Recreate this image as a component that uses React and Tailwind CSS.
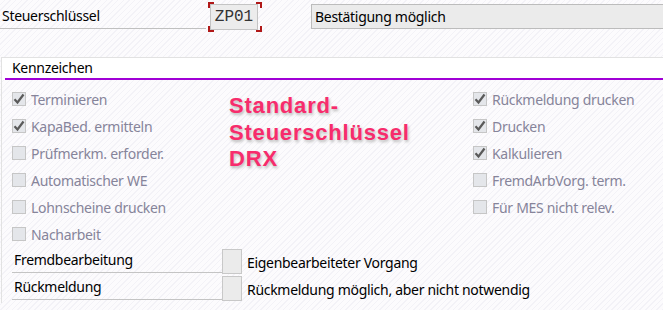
import React from 'react';

const Check = ({ checked }) => (
  <span className="flex h-[14px] w-[14px] shrink-0 items-center justify-center border border-[#c6c6c6] bg-[#e4e6ea]">
    {checked && (
      <svg width="12" height="12" viewBox="0 0 12 12">
        <path d="M1.5 6.2 L4.5 9.5 L10.5 1.5" fill="none" stroke="#5a5a5a" strokeWidth="2.2" strokeLinejoin="miter" />
      </svg>
    )}
  </span>
);

const Flag = ({ label, checked }) => (
  <div className="flex h-[27px] items-start gap-[5px]">
    <Check checked={checked} />
    <span className="-mt-[3px] whitespace-nowrap text-[14px] text-[#86849a]">{label}</span>
  </div>
);

const FieldRow = ({ label, text }) => (
  <div className="flex h-[27px] items-start">
    <div className="flex h-[24px] w-[210px] items-end border-b border-[#c4c4c4] pb-[2px] pl-[2px]">{label}</div>
    <div className="h-[25px] w-[20px] border border-[#c8c8c8] bg-[#ebebeb]" />
    <div className="pl-[5px] pt-[3px] whitespace-nowrap">{text}</div>
  </div>
);

export default function App() {
  const left = [
    ['Terminieren', true],
    ['KapaBed. ermitteln', true],
    ['Prüfmerkm. erforder.', false],
    ['Automatischer WE', false],
    ['Lohnscheine drucken', false],
    ['Nacharbeit', false],
  ];
  const right = [
    ['Rückmeldung drucken', true],
    ['Drucken', true],
    ['Kalkulieren', true],
    ['FremdArbVorg. term.', false],
    ['Für MES nicht relev.', false],
  ];

  return (
    <div className="h-[310px] w-[663px] overflow-hidden bg-[repeating-linear-gradient(135deg,#fcfbfd_0px,#fcfbfd_3px,#f3f2f7_3px,#f3f2f7_4px)] font-['Noto_Sans',sans-serif] text-[14px] tracking-[-0.3px] text-black">
      {/* Steuerschlüssel row */}
      <div className="flex h-[57px] items-start pt-[2px]">
        <div className="mt-[4px] flex h-[23px] w-[206px] items-end border-b border-[#c0c0c0] pb-[2px] pl-[2px]">Steuerschlüssel</div>
        <div className="relative ml-[2px] h-[30px] w-[54px] p-[2px]">
          <span className="absolute left-0 top-0 h-[6px] w-[6px] border-l-2 border-t-2 border-[#b01818]" />
          <span className="absolute right-0 top-0 h-[6px] w-[6px] border-r-2 border-t-2 border-[#b01818]" />
          <span className="absolute bottom-0 left-0 h-[6px] w-[6px] border-b-2 border-l-2 border-[#b01818]" />
          <span className="absolute bottom-0 right-0 h-[6px] w-[6px] border-b-2 border-r-2 border-[#b01818]" />
          <div className="flex h-[26px] w-[48px] items-center justify-center border border-[#c4c4c4] bg-[#ececec] font-['Liberation_Mono',monospace] text-[16px] tracking-normal text-[#333]">ZP01</div>
        </div>
        <div className="ml-[49px] mt-[2px] flex h-[25px] flex-1 items-center border-y border-l border-[#bcbcbc] bg-[#ebebeb] pl-[3px]">Bestätigung möglich</div>
      </div>

      {/* Kennzeichen group */}
      <div className="ml-[1px] border-l border-t border-[#e2e2e2]">
        <div className="bg-white pl-[3px]">
          <div className="h-[20px] pl-[7px] pt-[1px] leading-[18px]">Kennzeichen</div>
          <div className="h-[2px] bg-[#a000d6]" />
        </div>
        <div className="flex pt-[12px]">
          <div className="w-[227px] pl-[10px]">
            {left.map(([l, c]) => <Flag key={l} label={l} checked={c} />)}
          </div>
          <div className="w-[244px] pt-[1px] font-['Liberation_Sans',Arial,sans-serif] text-[22px] font-bold leading-[26.5px] tracking-[0.8px] text-[#f72c6c] [text-shadow:1px_2px_3px_#b8b8b8,0_0_2px_#fff]">
            Standard-<br />Steuerschlüssel<br />DRX
          </div>
          <div>
            {right.map(([l, c]) => <Flag key={l} label={l} checked={c} />)}
          </div>
        </div>
        <div className="-mt-[5px] pl-[10px]">
          <FieldRow label="Fremdbearbeitung" text="Eigenbearbeiteter Vorgang" />
          <FieldRow label="Rückmeldung" text="Rückmeldung möglich, aber nicht notwendig" />
        </div>
      </div>
    </div>
  );
}
